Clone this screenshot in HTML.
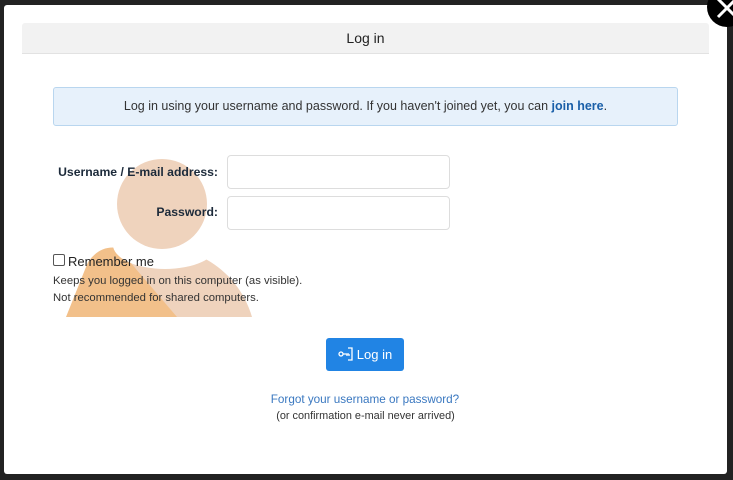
<!DOCTYPE html>
<html><head><style>
body{margin:0;width:733px;height:480px;background:#222;position:relative;overflow:hidden;font-family:"Liberation Sans",sans-serif;}
.m{position:absolute;left:4px;top:5px;width:723px;height:469px;background:#fff;border-radius:3px;}
.hd{position:absolute;left:22px;top:23px;width:687px;height:30px;background:#f2f2f2;border-bottom:1px solid #e2e2e2;border-radius:3px 3px 0 0;text-align:center;line-height:31px;font-size:14px;color:#222;}
.al{position:absolute;left:53px;top:87px;width:623px;height:37px;background:#e7f1fb;border:1px solid #b9d6ef;border-radius:3px;text-align:center;line-height:37px;font-size:12.5px;color:#333;}
.al b{color:#1a5fa8;}
.lb{position:absolute;right:515px;font-size:12.2px;font-weight:bold;color:#1c2a3a;}
.in{position:absolute;left:227px;width:221px;height:32px;border:1px solid #ddd;border-radius:4px;background:transparent;}
.t{position:absolute;font-size:11.3px;color:#333;}
.btn{position:absolute;left:326px;top:338px;width:78px;height:33px;background:#2184e4;border-radius:3px;color:#fff;font-size:13px;line-height:33px;text-align:center;}
.x{position:absolute;left:707px;top:-13px;width:40px;height:40px;border-radius:50%;background:#000;}
</style></head><body>
<div class="m"></div>
<svg style="position:absolute;left:0;top:0" width="733" height="480">
<defs><clipPath id="c"><rect x="0" y="0" width="733" height="317"/></clipPath></defs>
<g clip-path="url(#c)">
<ellipse cx="162" cy="345" rx="94" ry="97" fill="#efd3bd"/>
<path d="M66 317 L88 262 Q100 245 118 248 L177 317 Z" fill="#f2c08a"/>
<ellipse cx="165" cy="245" rx="52" ry="24" fill="#fff"/>
</g>
<circle cx="162" cy="204" r="45" fill="#efd3bd"/>
</svg>
<div class="hd">Log in</div>
<div class="al">Log in using your username and password. If you haven't joined yet, you can <b>join here</b>.</div>
<div class="lb" style="top:165px">Username / E-mail address:</div>
<div class="lb" style="top:205px">Password:</div>
<div class="in" style="top:155px"></div>
<div class="in" style="top:196px"></div>
<div style="position:absolute;left:53px;top:254px;width:10px;height:10px;border:1px solid #555;border-radius:2px;background:rgba(255,255,255,.6)"></div>
<div class="t" style="left:68px;top:254px;font-size:13px;color:#222">Remember me</div>
<div class="t" style="left:53px;top:275px">Keeps you logged in on this computer (as visible).</div>
<div class="t" style="left:53px;top:292px">Not recommended for shared computers.</div>
<div class="btn"><svg width="16" height="14" viewBox="0 0 16 14" style="vertical-align:-2px;margin-right:3px"><circle cx="3" cy="7" r="2" fill="none" stroke="#fff" stroke-width="1.3"/><path d="M5 7H11M9 7V9M11 7V9M10 1H14V13H10" fill="none" stroke="#fff" stroke-width="1.3"/></svg>Log in</div>
<div class="t" style="left:0;width:730px;text-align:center;top:393px;font-size:11.7px;color:#3a78c0">Forgot your username or password?</div>
<div class="t" style="left:0;width:731px;text-align:center;top:410px;font-size:10.9px">(or confirmation e-mail never arrived)</div>
<div class="x"><svg width="40" height="40" style="position:absolute;left:0;top:0"><path d="M11 12L29 30M29 12L11 30" stroke="#fff" stroke-width="3"/></svg></div>
</body></html>
